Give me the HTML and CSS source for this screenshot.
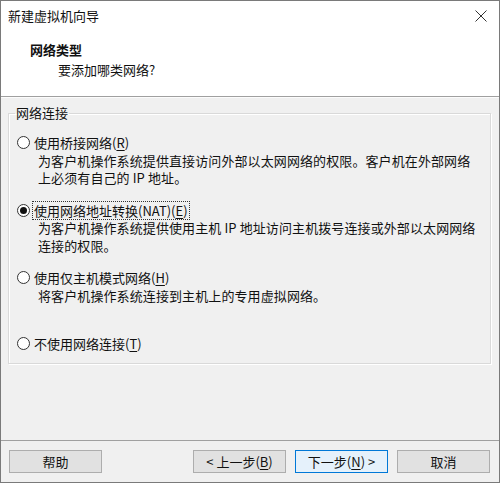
FILE: index.html
```html
<!DOCTYPE html>
<html lang="zh-CN">
<head>
<meta charset="utf-8">
<title>新建虚拟机向导</title>
<link rel="stylesheet" href="styles.css">
</head>
<body>
<div class="window">
  <header class="header">
    <div class="titlebar">
      <span class="title">新建虚拟机向导</span>
      <svg class="close" width="12" height="12" viewBox="0 0 12 12"><path d="M0.5 0.5 L11.5 11.5 M11.5 0.5 L0.5 11.5" stroke="#333" stroke-width="1" fill="none"/></svg>
    </div>
    <div class="heading">网络类型</div>
    <div class="subheading">要添加哪类网络?</div>
  </header>
  <main class="content">
    <fieldset class="group">
      <legend class="legend">网络连接</legend>
      <div class="option">
        <div class="row"><span class="radio"></span><span class="label">使用桥接网络(<u>R</u>)</span></div>
        <div class="desc">为客户机操作系统提供直接访问外部以太网网络的权限。客户机在外部网络<br>上必须有自己的 IP 地址。</div>
      </div>
      <div class="option">
        <div class="row"><span class="radio checked"></span><span class="label focus">使用网络地址转换(NAT)(<u>E</u>)</span></div>
        <div class="desc">为客户机操作系统提供使用主机 IP 地址访问主机拨号连接或外部以太网网络<br>连接的权限。</div>
      </div>
      <div class="option">
        <div class="row"><span class="radio"></span><span class="label">使用仅主机模式网络(<u>H</u>)</span></div>
        <div class="desc">将客户机操作系统连接到主机上的专用虚拟网络。</div>
      </div>
      <div class="option last">
        <div class="row"><span class="radio"></span><span class="label">不使用网络连接(<u>T</u>)</span></div>
      </div>
    </fieldset>
  </main>
  <footer class="footer">
    <button class="btn">帮助</button>
    <div class="spacer"></div>
    <button class="btn">&lt; 上一步(<u>B</u>)</button>
    <button class="btn primary">下一步(<u>N</u>) &gt;</button>
    <button class="btn">取消</button>
  </footer>
</div>
</body>
</html>
```
FILE: styles.css
```css
* { box-sizing: border-box; }
html, body { margin: 0; padding: 0; }
body {
  font-family: "Noto Sans CJK SC", "Noto Sans", sans-serif;
  font-size: 13px;
  color: #111;
  background: #f0f0f0;
}
.window {
  width: 500px;
  height: 483px;
  border: 1px solid #7a7a7a;
  background: #f0f0f0;
  display: flex;
  flex-direction: column;
}
.header {
  height: 96px;
  background: #fff;
  border-bottom: 1px solid #a0a0a0;
  box-shadow: 0 1px 0 #fcfcfc;
  padding-top: 6px;
  flex: none;
}
.titlebar {
  display: flex;
  justify-content: space-between;
  align-items: center;
  height: 18px;
  line-height: 18px;
  padding: 0 12px 0 7px;
}
.close { display: block; }
.heading {
  font-weight: bold;
  line-height: 18px;
  margin-top: 16px;
  padding-left: 29px;
}
.subheading {
  line-height: 18px;
  margin-top: 2px;
  padding-left: 57px;
}
.content {
  flex: none;
  padding: 7px 8px 0 7px;
}
.group {
  margin: 0;
  padding: 0 0 10px 8px;
  height: 260px;
  border: 1px solid #d9d9d9;
  box-shadow: inset 1px 1px 0 #fff, 1px 1px 0 #fff;
}
.legend {
  margin-left: -2px;
  padding: 0 1px;
  line-height: 18px;
}
.option { margin-top: 15px; }
.option:first-of-type { margin-top: 12px; }
.option.last { margin-top: 31px; }
.row {
  display: flex;
  align-items: center;
  line-height: 17.5px;
  height: 17.5px;
}
.radio {
  width: 13px;
  height: 13px;
  border-radius: 50%;
  border: 1px solid #333;
  background: #fff;
  flex: none;
  margin-right: 4px;
  display: flex;
  align-items: center;
  justify-content: center;
}
.radio.checked::after {
  content: "";
  width: 7px;
  height: 7px;
  border-radius: 50%;
  background: #111;
}
.label { padding: 0 1px; border: 1px solid transparent; margin-left: -2px; }
.label.focus { border: 1px dotted #333; }
.desc {
  line-height: 17.5px;
  padding-left: 21px;
  letter-spacing: 0.1px;
}
u { text-decoration: underline; text-underline-offset: 2px; }
.footer {
  margin-top: auto;
  border-top: 1px solid #a0a0a0;
  display: flex;
  align-items: center;
  gap: 9px;
  padding: 9px 9px 9px 8px;
  flex: none;
}
.spacer { flex: 1; }
.btn {
  width: 93px;
  height: 23px;
  font: inherit;
  color: #111;
  background: #e1e1e1;
  border: 1px solid #adadad;
  padding: 0;
  line-height: 20px;
}
.btn.primary {
  background: #e5f1fb;
  border-color: #0078d7;
}
```
